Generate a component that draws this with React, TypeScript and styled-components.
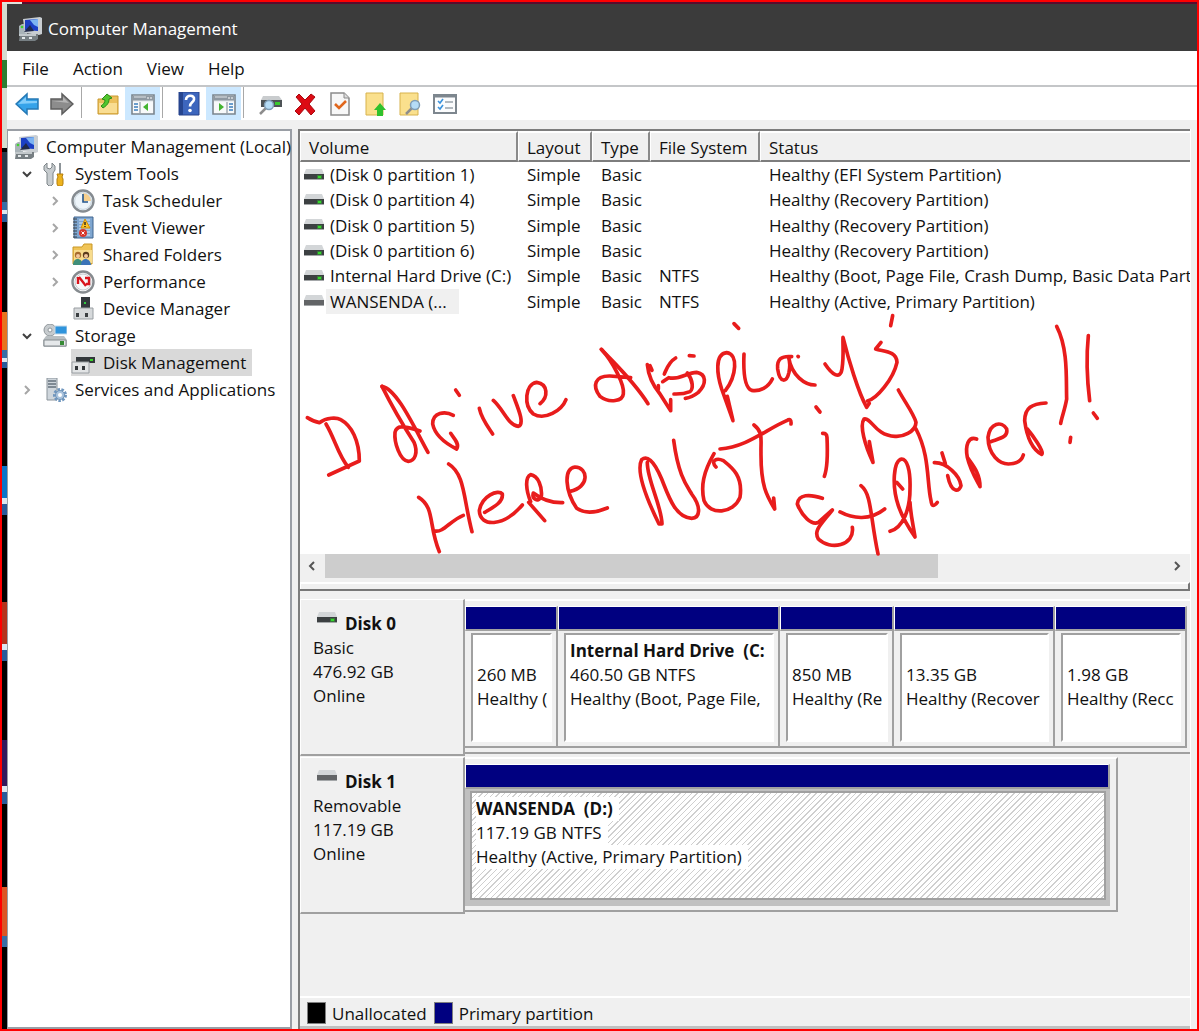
import React from "react";
import styled, { createGlobalStyle, css } from "styled-components";

const face = "#f0f0f0";
const navy = "#000080";

const GlobalStyle = createGlobalStyle`
  * { box-sizing: border-box; }
  body { margin: 0; background: ${face}; }
  body, button, table { font-family: "Open Sans", "Noto Sans", sans-serif; font-size: 17px; color: #111; }
  button { border: 0; padding: 0; margin: 0; background: none; }
  ul { list-style: none; margin: 0; padding: 0; }
  svg { display: block; flex: none; }
`;

/* ---------- frame ---------- */

const Frame = styled.div`
  min-height: 100vh;
  border: 2px solid #fe0000;
  display: grid;
  grid-template-columns: 5px minmax(0, 1fr);
  grid-template-rows: 2px minmax(0, 1fr);
`;

const DesktopTop = styled.div`
  grid-column: 1 / -1;
  background: linear-gradient(90deg, #dfe3dc 20px, #5a0a2c 20px);
`;

const DesktopEdge = styled.div`
  background: linear-gradient(
    180deg,
    #d5dccf 0 56px, #2e7d32 56px 84px, #d5dccf 84px 144px, #000 144px 148px,
    #2b3848 148px 198px, #3a6ea5 198px 206px, #dce6f0 206px 210px, #2a5a9a 210px 218px,
    #000 218px 308px, #e8731e 308px 346px, #3a6ea5 346px 354px, #dce6f0 354px 358px, #2a5a9a 358px 364px,
    #000 364px 462px, #0b74c8 462px 494px, #dce6f0 494px 500px, #2a5a9a 500px 511px,
    #000 511px 598px, #b5321c 598px 640px, #dce6f0 640px 646px, #2a5a9a 646px 657px,
    #000 657px 736px, #33185c 736px 782px, #dce6f0 782px 788px, #2a5a9a 788px 800px,
    #000 800px 883px, #dd5524 883px 932px, #3a6ea5 932px 943px, #000 943px
  );
`;

const Window = styled.main`
  display: flex;
  flex-direction: column;
  min-width: 0;
  background: ${face};
`;

const TitleBar = styled.header`
  height: 47px;
  flex: none;
  display: flex;
  align-items: center;
  gap: 6px;
  padding: 2px 0 0 11px;
  background: #3b3b3b;
  color: #fff;
  h1 { margin: 0; font-size: 17px; font-weight: 400; }
`;

const MenuBar = styled.nav`
  height: 36px;
  flex: none;
  display: flex;
  padding: 1px 3px 0 3px;
  background: #fff;
  border-bottom: 2px solid #c4c6c8;
`;

const MenuItem = styled.button`
  padding: 0 12px;
`;

const Toolbar = styled.div`
  height: 33px;
  flex: none;
  display: flex;
  padding-left: 2px;
  background: #fff;
`;

const ToolButton = styled.button<{ $on?: boolean }>`
  width: 35px;
  display: flex;
  align-items: center;
  justify-content: center;
  background: ${(p) => (p.$on ? "#cce8ff" : "transparent")};
`;

const Separator = styled.span`
  width: 11px;
  padding-left: 2px;
  &::before {
    content: "";
    display: block;
    width: 1px;
    height: 31px;
    background: #a8a8a8;
  }
`;

const Body = styled.div`
  flex: 1;
  min-height: 0;
  display: grid;
  grid-template-columns: 285px minmax(0, 1fr);
  column-gap: 6px;
  padding: 9px 6px 0 0;
`;

/* ---------- tree ---------- */

const TreePane = styled.aside`
  background: #fff;
  border: 2px solid #9a9ea5;
  border-left-width: 1px;
  padding: 2px 0 0 6px;
`;

const TreeRow = styled.li<{ $level: number }>`
  height: 27px;
  display: flex;
  align-items: center;
  padding-left: ${(p) => Math.max(0, p.$level - 1) * 28}px;
`;

const Toggle = styled.span`
  width: 29px;
  padding-right: 4px;
  display: flex;
  justify-content: center;
`;

const TreeLabel = styled.button<{ $selected?: boolean }>`
  height: 27px;
  display: flex;
  align-items: center;
  gap: 8px;
  white-space: nowrap;
  padding-right: 6px;
  background: ${(p) => (p.$selected ? "#d9d9d9" : "transparent")};
`;

/* ---------- right side ---------- */

const Panes = styled.section`
  display: grid;
  grid-template-rows: minmax(0, 461fr) minmax(0, 438fr);
  min-width: 0;
  border-left: 2px solid #7d7d7d;
  border-right: 1px solid #fff;
`;

const ListPane = styled.div`
  position: relative;
  display: flex;
  flex-direction: column;
  overflow: hidden;
  border-top: 2px solid #7d7d7d;
  border-bottom: 2px solid #777;
`;

const ListBody = styled.div`
  flex: 1;
  min-height: 0;
  overflow: hidden;
  background: #fff;
`;

const Volumes = styled.table`
  width: 100%;
  height: 183px;
  table-layout: fixed;
  border-collapse: separate;
  border-spacing: 0;
  th, td {
    text-align: left;
    font-weight: 400;
    white-space: nowrap;
    overflow: hidden;
    padding: 0 0 0 9px;
    line-height: 25px;
  }
  td:first-child { padding-left: 4px; }
  th {
    height: 29px;
    background: ${face};
    border: 2px solid #fff;
    border-right-color: #8a8a8a;
    border-bottom-color: #7d7d7d;
    border-left-width: 1px;
    padding: 2px 0 0 8px;
  }
  th:last-child { border-right: 0; }
`;

const Col = styled.col<{ $w?: number }>`
  width: ${(p) => (p.$w ? `${p.$w}px` : "auto")};
`;

const VolumeName = styled.span<{ $selected?: boolean }>`
  display: flex;
  align-items: center;
  gap: 2px;
  span {
    padding: 0 12px 0 4px;
    background: ${(p) => (p.$selected ? face : "transparent")};
  }
`;

const Ink = styled.svg`
  position: absolute;
  top: 0;
  left: 0;
  pointer-events: none;
`;

const ScrollBar = styled.div`
  height: 25px;
  flex: none;
  display: flex;
  background: ${face};
`;

const ScrollButton = styled.button`
  width: 25px;
  display: flex;
  align-items: center;
  justify-content: center;
`;

const ScrollTrack = styled.div`
  flex: 1;
  &::before {
    content: "";
    display: block;
    width: 73%;
    height: 24px;
    background: #cdcdcd;
  }
`;

const Splitter = styled.div`
  height: 10px;
  flex: none;
  background: ${face};
  padding-top: 3px;
  &::before {
    content: "";
    display: block;
    height: 7px;
    border: solid #fff;
    border-width: 2px 0 0 1px;
    border-bottom: 1px solid #b0b0b0;
    border-right: 2px solid #777;
  }
`;

const DiskPane = styled.div`
  display: flex;
  flex-direction: column;
  min-width: 0;
  padding-top: 8px;
`;

const DiskRow = styled.div`
  display: grid;
  grid-template-columns: 165px minmax(0, 1fr);
  height: 158px;
  flex: none;
`;

const DiskInfo = styled.div`
  height: 157px;
  border: 1px solid #fff;
  border-right: 2px solid #a0a0a0;
  border-bottom: 2px solid #a0a0a0;
  padding: 12px 0 0 12px;
  line-height: 24px;
`;

const DiskName = styled.strong`
  display: flex;
  gap: 8px;
  padding-left: 4px;
`;

const DiskGraph = styled.div<{ $fill: number }>`
  width: ${(p) => p.$fill}%;
  height: 155px;
  display: flex;
  border-top: 2px solid #fff;
  border-bottom: 2px solid #a0a0a0;
  padding: 5px 3px 4px 0;
  ${(p) => p.$fill < 100 && css`border-right: 2px solid #a0a0a0; padding-right: 6px;`}
`;

const Part = styled.div<{ $share: number }>`
  flex: ${(p) => p.$share} 1 0;
  min-width: 0;
  display: flex;
  flex-direction: column;
`;

const PartBar = styled.div`
  height: 25px;
  flex: none;
  background: ${navy};
  border: 1px solid #fff;
  border-right: 2px solid #a0a0a0;
  border-bottom: 2px solid #a0a0a0;
`;

const PartBox = styled.div<{ $active?: boolean }>`
  flex: 1;
  display: flex;
  min-width: 0;
  padding: 2px 4px 4px 6px;
  border-right: 2px solid #a0a0a0;
  border-bottom: 2px solid #a0a0a0;
  ${(p) =>
    p.$active &&
    css`
      background: #c0c0c0;
      border-color: #c0c0c0;
      padding: 2px 2px 4px 5px;
    `}
`;

const PartText = styled.div<{ $active?: boolean }>`
  flex: 1;
  min-width: 0;
  overflow: hidden;
  background: #fff;
  border: 2px solid #a0a0a0;
  padding: 4px 2px 0 4px;
  line-height: 24px;
  ${(p) =>
    p.$active
      ? css`background: repeating-linear-gradient(135deg, #fff 0 3px, #cfcfcf 3px 4px);`
      : css`border-right-color: #fff; border-bottom-color: #fff;`}
`;

const PartLine = styled.div<{ $bold?: boolean }>`
  height: 24px;
  white-space: pre;
  overflow: hidden;
  font-weight: ${(p) => (p.$bold ? 700 : 400)};
  span { display: inline-block; background: #fff; padding-right: 6px; height: 24px; }
`;

const Legend = styled.footer`
  margin-top: auto;
  height: 33px;
  display: flex;
  align-items: center;
  gap: 7px;
  padding: 2px 0 0 7px;
  border-top: 2px solid #fff;
  border-bottom: 3px solid #c0c0c0;
`;

const Key = styled.span<{ $color: string }>`
  display: flex;
  align-items: center;
  gap: 6px;
  &::before {
    content: "";
    width: 17px;
    height: 20px;
    background: ${(p) => p.$color};
    border: 1px solid #808080;
  }
`;

/* ---------- icons ---------- */

const I = (p: { w?: number; h?: number; box?: string; children: React.ReactNode }) => (
  <svg width={p.w ?? 24} height={p.h ?? 24} viewBox={p.box ?? `0 0 ${p.w ?? 24} ${p.h ?? 24}`} aria-hidden="true">
    {p.children}
  </svg>
);

const ComputerIcon = () => (
  <I>
    <path d="M1 9 4 7h5v10H1z" fill="#a9b3b8" />
    <path d="M5 2 22 0l2 1v16l-3 1-14-2z" fill="#c9ced2" />
    <path d="M7 3 20 2v12L7 13z" fill="#1c3fc4" />
    <path d="M12 3 20 2v8l-4-2z" fill="#7db4f2" />
    <path d="M6 15 12 8l4 6z" fill="#20294a" />
    <path d="M2 17h18v5l-3 2H1z" fill="#777f83" />
    <path d="M1 17h17v2H1z" fill="#c2c8cb" />
    <path d="M4 20h3v2H4zM11 20h3v2h-3z" fill="#e4e8ea" />
    <circle cx="4" cy="10" r="1.3" fill="#3fd22f" />
  </I>
);

const ToolsIcon = () => (
  <I>
    <path d="M4 1 4 6 7 7 9 5V1l3 3v4l-2 3v11l-2 2H6l-2-2V11L1 8V4z" fill="#c7cccf" stroke="#7d8488" />
    <path d="M16 1h2v11h-2z" fill="#8d9498" />
    <path d="M14 12h6l-1 3 1 2v5l-1 2h-4l-1-2v-5l1-2z" fill="#eeb31d" stroke="#b47e0c" />
  </I>
);

const ClockIcon = () => (
  <I>
    <circle cx="12" cy="12" r="10.5" fill="#eef5fa" stroke="#858b90" strokeWidth="2.4" />
    <path d="M12 12V4a8 8 0 0 1 8 8z" fill="#f6cf8c" />
    <circle cx="12" cy="12" r="8.4" fill="none" stroke="#c9d4dc" />
    <path d="M12 5v8h5" fill="none" stroke="#26558a" strokeWidth="1.6" />
  </I>
);

const EventIcon = () => (
  <I>
    <path d="M3 1h19v21H3z" fill="#7fa6d0" stroke="#40648e" />
    <path d="M8 4h11M8 7h11M8 10h11M8 13h11M8 16h11M8 19h11" stroke="#dbe8f5" />
    <path d="M2 3h4M2 6h4M2 9h4M2 12h4M2 15h4M2 18h4M2 21h4" stroke="#3c4248" />
    <path d="m14 3 5 9h-9z" fill="#ffc524" stroke="#d18b06" />
    <path d="M14 6v3M14 10v1" stroke="#222" strokeWidth="1.4" />
    <circle cx="12" cy="17" r="4" fill="#d8372b" />
    <path d="m10.500 15.500 3 3m0-3-3 3" stroke="#fff" />
  </I>
);

const SharedIcon = () => (
  <I>
    <path d="M2 4h9l2-3h8v20H2z" fill="#f0c457" stroke="#c99724" />
    <path d="M3 7h18v13H3z" fill="#f8dc8d" />
    <circle cx="7" cy="12" r="3.200" fill="#a66b2e" />
    <circle cx="15" cy="12" r="3.200" fill="#5b3b1d" />
    <path d="M2 22c0-8 9-8 10 0z" fill="#3f8f7a" />
    <path d="M10 22c0-8 9-8 10 0z" fill="#3c74b8" />
    <circle cx="7" cy="13" r="2" fill="#f3c79c" />
    <circle cx="15" cy="13" r="2" fill="#f3c79c" />
  </I>
);

const PerfIcon = () => (
  <I>
    <circle cx="12" cy="12" r="10.500" fill="#f7f8f9" stroke="#868b8f" strokeWidth="2.400" />
    <circle cx="12" cy="12" r="8" fill="none" stroke="#c8ccd0" />
    <path d="M7 7v7M8 7l7 9M14 8h4v6h-3" fill="none" stroke="#d9141c" strokeWidth="2.400" />
  </I>
);

const DeviceIcon = () => (
  <I>
    <path d="M10 0h9v12h-9z" fill="#33383c" />
    <path d="M13 5h2v2h-2z" fill="#2ecc40" />
    <path d="M3 11h19v11H3z" fill="#d6d9db" stroke="#999ea2" />
    <path d="M5 16h3v4H5zM14 16h3v4h-3z" fill="#3b3f42" />
  </I>
);

const StorageIcon = () => (
  <I>
    <circle cx="7" cy="6" r="6" fill="#c6cbce" stroke="#8f969a" />
    <circle cx="7" cy="6" r="2" fill="#fff" stroke="#8f969a" />
    <path d="M12 2h12v8H12z" fill="#2f94dc" stroke="#c5d9e8" />
    <path d="M3 12h18l3 4v6l-1 1H1l-1-1v-6z" fill="#b9bfc2" />
    <path d="M1 16h22v6H1z" fill="#e5e8ea" stroke="#868c90" />
    <path d="M17 17h4v4h-4z" fill="#368a35" />
  </I>
);

const DiskMgmtIcon = () => (
  <I>
    <path d="M7 3h14l3 4H5z" fill="#d8dadb" />
    <path d="M5 6h19v6H5z" fill="#33383b" />
    <path d="M19 8h3v2h-3z" fill="#39d52c" />
    <path d="M1 11h17v11H1z" fill="#e2e4e5" stroke="#9a9fa3" />
    <path d="M4 15h3v4H4zM11 15h3v4h-3z" fill="#33373a" />
  </I>
);

const ServicesIcon = () => (
  <I>
    <path d="M4 0h10v22H4z" fill="#cfd6dc" stroke="#8b949b" />
    <path d="M5 3h8M5 6h8M5 9h8" stroke="#65727c" strokeWidth="1.400" />
    <circle cx="17" cy="17" r="5.500" fill="none" stroke="#6f96be" strokeWidth="3" strokeDasharray="2.400 1.400" />
    <circle cx="17" cy="17" r="4.500" fill="#a9c3dd" stroke="#6f93b8" />
    <circle cx="17" cy="17" r="2" fill="#fff" />
  </I>
);

const DriveIcon = ({ off }: { off?: boolean }) => (
  <I w={20} h={12}>
    <path d="M2 0h16l2 5H0z" fill="#d3d6d8" />
    <path d="M0 5h20v5H0z" fill={off ? "#626466" : "#3c4042"} />
    <path d="M0 10h20v1H0z" fill="#a4a7a9" />
    {!off && <path d="M14 7h3v2h-3z" fill="#35d92b" />}
    {!off && <path d="M13 6h5v4h-5z" fill="#35d92b" opacity=".35" />}
  </I>
);

const Chevron = ({ open }: { open?: boolean }) => (
  <I w={12} h={12}>
    <path d={open ? "m2 4 4 4 4-4" : "m4 2 4 4-4 4"} fill="none" stroke={open ? "#404040" : "#a6a6a6"} strokeWidth="2" />
  </I>
);

const Arrow = ({ back }: { back?: boolean }) => (
  <I>
    <path
      d={back ? "M1 12 12 2v5h11v10H12v5z" : "M23 12 12 2v5H1v10h11v5z"}
      fill={back ? "#35a3ea" : "#8c8c8c"}
      stroke={back ? "#2679b5" : "#5e5e5e"}
      strokeWidth="1.500"
    />
    <path d={back ? "M3 12 11 5v4h11v2z" : "M2 9h11V5l6 6z"} fill={back ? "#83cdfa" : "#b5b5b5"} />
  </I>
);

const FolderUpIcon = () => (
  <I>
    <path d="M2 7h8l2-3h10v18H2z" fill="#ecc05c" stroke="#c8982e" />
    <path d="M3 11h18v10H3z" fill="#f9dd92" />
    <path d="m11 2 5 4-3 1c0 5-3 7-6 9l-2-2c3-2 4-4 4-6L6 7z" fill="#52c62f" stroke="#2c8d18" />
  </I>
);

const PanelIcon = ({ flip }: { flip?: boolean }) => (
  <I>
    <path d="M1 3h22v19H1z" fill="#f7f9fa" stroke="#7b858e" strokeWidth="1.600" />
    <path d="M2 4h20v5H2z" fill="#8f99a2" />
    <path d="M3 5h12M2 9h20" stroke="#dfe4e8" />
    <path d="M16 6h2M19 6h2" stroke="#fff" />
    <path d={flip ? "M15 10v11" : "M9 10v11"} stroke="#7b858e" />
    <path d={flip ? "M17 12h4M17 15h4M17 18h4" : "M3 12h4M3 15h4M3 18h4"} stroke="#3d7fbd" strokeWidth="1.500" />
    <path d={flip ? "m7 11 5 4-5 4z" : "m17 11-5 4 5 4z"} fill="#44b431" />
  </I>
);

const HelpIcon = () => (
  <I>
    <path d="M2 0h20v23H2z" fill="#3d66bd" stroke="#2a458c" />
    <path d="M2 0h4v23H2z" fill="#26458f" />
    <path d="M9 8c0-6 9-5 8-.500-.500 3-4 3-4 7" fill="none" stroke="#fff" strokeWidth="2.600" />
    <circle cx="13" cy="18.500" r="1.800" fill="#fff" />
  </I>
);

const Lens = ({ x, y }: { x: number; y: number }) => (
  <g>
    <path d={`M${x - 3} ${y + 3}l-6 6`} stroke="#8d8d8d" strokeWidth="2.500" />
    <circle cx={x} cy={y} r="4.500" fill="#b5dcf6" stroke="#7f9db5" strokeWidth="1.500" />
  </g>
);

const DiskLensIcon = () => (
  <I>
    <path d="M5 4h16l3 4H3z" fill="#c9ccce" />
    <path d="M3 8h21v7H3z" fill="#4d5356" />
    <path d="M17 10h5v3h-5z" fill="#39c92e" />
    <Lens x={11} y={13} />
  </I>
);

const DeleteIcon = () => (
  <I>
    <path d="m3 5 3-3 6 6 6-6 4 3-6 7 6 7-4 4-6-7-6 7-4-4 7-7z" fill="#dc0b14" stroke="#a90910" />
  </I>
);

const CheckDocIcon = () => (
  <I>
    <path d="M3 1h13l5 5v17H3z" fill="#f7f7f7" stroke="#8b8b8b" strokeWidth="1.500" />
    <path d="M16 1v5h5" fill="#ddd" stroke="#8b8b8b" />
    <path d="m7 12 4 4 7-7" fill="none" stroke="#e0661c" strokeWidth="2.600" />
  </I>
);

const UploadIcon = () => (
  <I>
    <path d="M3 1h17v22H3z" fill="#fae08d" stroke="#d7b24c" />
    <path d="m17 11 6 7h-3v6h-6v-6h-3z" fill="#2fc12c" />
  </I>
);

const SearchDocIcon = () => (
  <I>
    <path d="M2 1h18v22H2z" fill="#fae08d" stroke="#d7b24c" />
    <Lens x={17} y={13} />
  </I>
);

const ListIcon = () => (
  <I>
    <path d="M1 3h22v18H1z" fill="#fbfcfd" stroke="#7d868e" strokeWidth="2" />
    <path d="M1 4h22" stroke="#7d868e" strokeWidth="3" />
    <path d="m5 9 2 2 3-4M5 15l2 2 3-4" fill="none" stroke="#3a92dc" strokeWidth="1.600" />
    <path d="M12 10h8M12 16h8" stroke="#9ba3aa" strokeWidth="1.600" />
  </I>
);

const Angle = ({ right }: { right?: boolean }) => (
  <I w={12} h={12}>
    <path d={right ? "m3 2 4 4-4 4" : "m7 2-4 4 4 4"} fill="none" stroke="#555" strokeWidth="2" />
  </I>
);

/* ---------- pen marks over the list, in three groups of strokes ---------- */

const inkGroups: { x: number; d: string[] }[] = [
  {
    x: 290,
    d: [
      "M52 326Q72 338 88 341C110 325 140 325 152 332C185 350 208 395 208 456L116 498",
      "M108 345C135 390 145 440 175 475",
      "M276 232C310 300 340 350 372 400C385 430 375 456 355 457C330 455 312 400 315 370C320 350 335 348 390 366",
      "M276 232C320 240 370 350 414 430",
      "M490 319C465 305 428 310 428 345C435 380 470 405 500 420C510 405 490 385 482 373",
      "M568 298C575 330 595 355 608 375M497 243L508 259",
      "M610 274C640 300 655 350 685 352C705 345 685 300 670 260",
      "M750 284C775 265 775 225 740 220C705 225 700 290 730 315C765 335 815 305 828 272",
      "M386 565C435 595 415 650 448 728",
      "M476 465C525 495 520 570 546 668",
      "M434 666C460 672 480 635 520 619",
      "M584 610C610 595 640 580 637 555C625 540 575 560 568 605C570 655 640 655 697 588",
      "M716 580L764 635M722 578C708 545 704 505 722 497C745 500 757 535 754 562C745 582 725 570 730 552C760 575 790 582 818 581",
      "M840 547C900 535 895 475 855 474C820 480 825 545 860 598C885 615 920 610 952 597",
    ],
  },
  {
    x: 610,
    d: [
      "M-26 121C10 160 45 230 40 255C38 275 0 285-30 262C-55 230-45 200 0 201L62 206",
      "M-26 121C20 170 70 215 114 284",
      "M112 167C115 200 125 225 150 255L182 305L182 272M120 170L126 184",
      "M197 147C175 160 170 180 163 195M145 230L145 240M238 140L252 141M372 44L386 58",
      "M158 218L176 206C210 215 230 190 260 190C290 195 290 225 265 250C250 262 240 266 226 268",
      "M232 192C250 215 250 240 240 248Q220 256 192 255",
      "M346 245C380 200 385 135 350 131C312 135 322 200 335 240L369 335L352 262",
      "M402 135C400 180 402 235 425 244C450 248 475 235 487 210",
      "M545 143C515 140 500 150 503 180C510 225 530 220 537 190Q542 165 536 146C545 200 585 228 615 228M564 142L565 143",
      "M645 165C665 195 690 215 696 180C702 140 698 110 699 85C715 150 745 250 770 295L778 283",
      "M772 276C800 270 850 210 861 160C860 125 820 128 797 120L813 100M848 20L842 50",
      "M191 394C205 500 230 530 245 555C275 595 270 628 245 628C195 625 175 560 155 510C130 450 110 440 95 452C75 490 120 590 147 645L156 645C155 590 110 510 112 460",
      "M312 434C280 490 272 530 282 575C300 620 370 615 390 565C400 500 365 475 340 455C320 445 300 455 318 474",
      "M330 420C410 415 470 360 530 335Q545 325 543 345",
      "M432 348C460 370 452 390 453 430C452 530 470 560 494 600L491 567",
      "M638 373Q650 372 651 385Q655 470 643 502M618 294L630 309",
      "M789 460C765 410 748 350 762 330C785 325 795 380 855 382C875 384 917 370 918 340C912 315 885 280 865 243M778 398L789 460",
      "M637 568C600 555 565 555 562 585C575 620 605 650 625 640L667 603C630 650 610 665 625 690C660 725 735 710 727 655",
      "M690 609C730 630 780 635 824 600",
      "M753 530C785 555 780 620 804 735",
    ],
  },
  {
    x: 880,
    d: [
      "M108 360C150 440 140 520 153 575C155 595 162 592 172 580",
      "M30 667C70 655 90 600 90 540C92 480 80 450 65 450C40 455 35 530 55 590C65 620 85 655 105 684C100 650 92 620 90 580M50 520L68 540",
      "M163 461C200 460 240 500 243 530C240 545 215 560 203 500M186 432L196 464",
      "M290 390C265 380 255 410 262 445C270 480 285 505 300 533C300 490 275 465 262 445",
      "M332 398C360 388 385 385 380 360C365 335 330 340 324 385C325 440 360 465 385 465C410 465 425 455 430 438",
      "M498 282C455 285 435 295 434 335C440 380 455 420 485 436C495 430 455 375 442 360",
      "M530 52C565 120 558 210 560 270C555 300 545 325 542 343M572 385L570 400",
      "M625 80C618 150 622 220 629 275M640 312L652 328",
    ],
  },
];

const PenMarks = () => (
  <Ink width="891" height="426" viewBox="300 132 891 426" aria-hidden="true">
    {inkGroups.map((g) => (
      <g
        key={g.x}
        transform={`translate(${g.x} 310) scale(0.33333)`}
        fill="none"
        stroke="#e81c1c"
        strokeWidth="11"
        strokeLinecap="round"
        strokeLinejoin="round"
      >
        {g.d.map((d) => (
          <path key={d} d={d} />
        ))}
      </g>
    ))}
  </Ink>
);

/* ---------- data ---------- */

type Node = { label: string; icon: React.ReactNode; level: number; toggle?: "open" | "closed"; selected?: boolean };

const nodes: Node[] = [
  { label: "Computer Management (Local)", icon: <ComputerIcon />, level: 0 },
  { label: "System Tools", icon: <ToolsIcon />, level: 1, toggle: "open" },
  { label: "Task Scheduler", icon: <ClockIcon />, level: 2, toggle: "closed" },
  { label: "Event Viewer", icon: <EventIcon />, level: 2, toggle: "closed" },
  { label: "Shared Folders", icon: <SharedIcon />, level: 2, toggle: "closed" },
  { label: "Performance", icon: <PerfIcon />, level: 2, toggle: "closed" },
  { label: "Device Manager", icon: <DeviceIcon />, level: 2 },
  { label: "Storage", icon: <StorageIcon />, level: 1, toggle: "open" },
  { label: "Disk Management", icon: <DiskMgmtIcon />, level: 2, selected: true },
  { label: "Services and Applications", icon: <ServicesIcon />, level: 1, toggle: "closed" },
];

const volumes = [
  { name: "(Disk 0 partition 1)", fs: "", status: "Healthy (EFI System Partition)" },
  { name: "(Disk 0 partition 4)", fs: "", status: "Healthy (Recovery Partition)" },
  { name: "(Disk 0 partition 5)", fs: "", status: "Healthy (Recovery Partition)" },
  { name: "(Disk 0 partition 6)", fs: "", status: "Healthy (Recovery Partition)" },
  { name: "Internal Hard Drive (C:)", fs: "NTFS", status: "Healthy (Boot, Page File, Crash Dump, Basic Data Part" },
  { name: "WANSENDA (...", fs: "NTFS", status: "Healthy (Active, Primary Partition)", selected: true },
];

const disks = [
  {
    name: "Disk 0",
    info: ["Basic", "476.92 GB", "Online"],
    fill: 100,
    parts: [
      { share: 93, title: "", lines: ["260 MB", "Healthy ("] },
      { share: 222, title: "Internal Hard Drive  (C:", lines: ["460.50 GB NTFS", "Healthy (Boot, Page File,"] },
      { share: 114, title: "", lines: ["850 MB", "Healthy (Re"] },
      { share: 161, title: "", lines: ["13.35 GB", "Healthy (Recover"] },
      { share: 132, title: "", lines: ["1.98 GB", "Healthy (Recc"] },
    ],
  },
  {
    name: "Disk 1",
    removable: true,
    info: ["Removable", "117.19 GB", "Online"],
    fill: 90,
    parts: [{ share: 1, title: "WANSENDA  (D:)", lines: ["117.19 GB NTFS", "Healthy (Active, Primary Partition)"] }],
  },
];

const tools: ({ label: string; icon: React.ReactNode; on?: boolean } | null)[] = [
  { label: "Back", icon: <Arrow back /> },
  { label: "Forward", icon: <Arrow /> },
  null,
  { label: "Up one level", icon: <FolderUpIcon /> },
  { label: "Show or hide console tree", icon: <PanelIcon />, on: true },
  null,
  { label: "Help", icon: <HelpIcon /> },
  { label: "Show or hide action pane", icon: <PanelIcon flip />, on: true },
  null,
  { label: "Refresh", icon: <DiskLensIcon /> },
  { label: "Delete", icon: <DeleteIcon /> },
  { label: "Properties", icon: <CheckDocIcon /> },
  { label: "Open", icon: <UploadIcon /> },
  { label: "Explore", icon: <SearchDocIcon /> },
  { label: "Settings", icon: <ListIcon /> },
];

export default function App() {
  return (
    <>
      <GlobalStyle />
      <Frame>
        <DesktopTop />
        <DesktopEdge />
        <Window>
          <TitleBar>
            <ComputerIcon />
            <h1>Computer Management</h1>
          </TitleBar>
          <MenuBar>
            {["File", "Action", "View", "Help"].map((m) => (
              <MenuItem key={m}>{m}</MenuItem>
            ))}
          </MenuBar>
          <Toolbar>
            {tools.map((t, i) =>
              t ? (
                <ToolButton key={t.label} $on={t.on} aria-label={t.label}>
                  {t.icon}
                </ToolButton>
              ) : (
                <Separator key={i} />
              )
            )}
          </Toolbar>
          <Body>
            <TreePane>
              <ul>
                {nodes.map((n) => (
                  <TreeRow key={n.label} $level={n.level}>
                    {n.level > 0 && <Toggle>{n.toggle && <Chevron open={n.toggle === "open"} />}</Toggle>}
                    <TreeLabel $selected={n.selected}>
                      {n.icon}
                      {n.label}
                    </TreeLabel>
                  </TreeRow>
                ))}
              </ul>
            </TreePane>
            <Panes>
              <ListPane>
                <ListBody>
                  <Volumes>
                    <colgroup>
                      <Col $w={218} />
                      <Col $w={74} />
                      <Col $w={58} />
                      <Col $w={110} />
                      <Col />
                    </colgroup>
                    <thead>
                      <tr>
                        <th>Volume</th>
                        <th>Layout</th>
                        <th>Type</th>
                        <th>File System</th>
                        <th>Status</th>
                      </tr>
                    </thead>
                    <tbody>
                      {volumes.map((v) => (
                        <tr key={v.name}>
                          <td>
                            <VolumeName $selected={v.selected}>
                              <DriveIcon off={v.selected} />
                              <span>{v.name}</span>
                            </VolumeName>
                          </td>
                          <td>Simple</td>
                          <td>Basic</td>
                          <td>{v.fs}</td>
                          <td>{v.status}</td>
                        </tr>
                      ))}
                    </tbody>
                  </Volumes>
                </ListBody>
                <ScrollBar>
                  <ScrollButton aria-label="Scroll left">
                    <Angle />
                  </ScrollButton>
                  <ScrollTrack />
                  <ScrollButton aria-label="Scroll right">
                    <Angle right />
                  </ScrollButton>
                </ScrollBar>
                <Splitter />
                <PenMarks />
              </ListPane>
              <DiskPane>
                {disks.map((d) => (
                  <DiskRow key={d.name}>
                    <DiskInfo>
                      <DiskName>
                        <DriveIcon off={d.removable} />
                        {d.name}
                      </DiskName>
                      {d.info.map((t) => (
                        <div key={t}>{t}</div>
                      ))}
                    </DiskInfo>
                    <DiskGraph $fill={d.fill}>
                      {d.parts.map((p) => (
                        <Part key={p.lines[0]} $share={p.share}>
                          <PartBar />
                          <PartBox $active={d.removable}>
                            <PartText $active={d.removable}>
                              <PartLine $bold>{p.title && <span>{p.title}</span>}</PartLine>
                              {p.lines.map((t) => (
                                <PartLine key={t}>
                                  <span>{t}</span>
                                </PartLine>
                              ))}
                            </PartText>
                          </PartBox>
                        </Part>
                      ))}
                    </DiskGraph>
                  </DiskRow>
                ))}
                <Legend>
                  <Key $color="#000">Unallocated</Key>
                  <Key $color={navy}>Primary partition</Key>
                </Legend>
              </DiskPane>
            </Panes>
          </Body>
        </Window>
      </Frame>
    </>
  );
}
